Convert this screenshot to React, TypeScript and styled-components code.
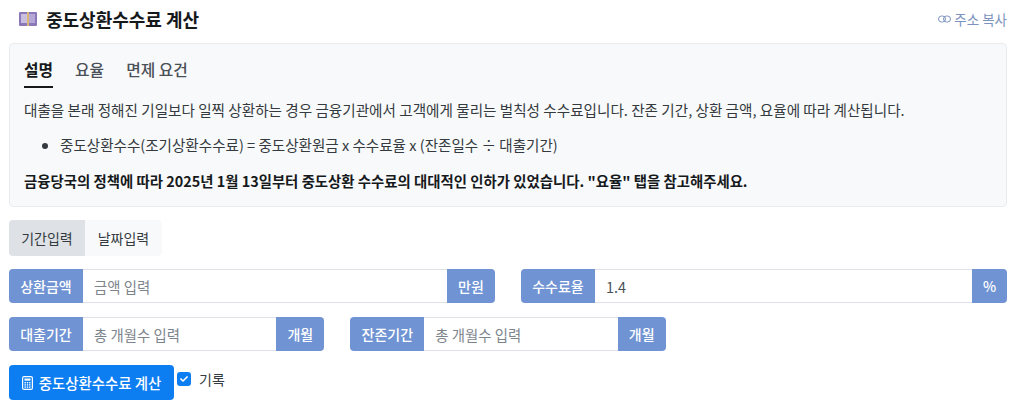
import React, { useState } from "react";
import styled, { createGlobalStyle } from "styled-components";
import { FaCheck } from "react-icons/fa";

const GlobalStyle = createGlobalStyle`
  html, body {
    margin: 0;
    padding: 0;
    background: #fff;
    font-family: "Noto Sans CJK KR", "Noto Sans", sans-serif;
    color: #212529;
  }
  * { box-sizing: border-box; }
`;

const Page = styled.div`
  width: 1024px;
  height: 411px;
  overflow: hidden;
  padding: 0 17px 0 9px;
`;

const Header = styled.header`
  display: flex;
  align-items: center;
  justify-content: space-between;
  height: 43px;
  padding: 0 0 5px 10px;
`;

const Title = styled.h1`
  display: flex;
  align-items: center;
  gap: 9px;
  margin: 0;
  font-size: 18px;
  font-weight: 700;
  line-height: 24px;
  color: #16191c;
`;

const CopyLink = styled.a`
  display: flex;
  align-items: center;
  gap: 3px;
  font-size: 13.5px;
  color: #7b93bd;
  text-decoration: none;
`;

const InfoPanel = styled.section`
  height: 164px;
  padding: 12px 14px;
  background: #f8f9fa;
  border: 1px solid #e9ecef;
  border-radius: 4px;
`;

const Tabs = styled.div`
  display: flex;
  gap: 22px;
  height: 32px;
`;

const Tab = styled.div<{ $active?: boolean }>`
  height: 32px;
  border-bottom: 2px solid ${({ $active }) => ($active ? "#16191c" : "transparent")};
  color: ${({ $active }) => ($active ? "#16191c" : "#495057")};
  font-size: 15.8px;
  font-weight: ${({ $active }) => ($active ? 700 : 500)};
  line-height: 28px;
`;

const Paragraph = styled.p`
  margin: 11px 0 0;
  font-size: 14.6px;
  line-height: 22px;
  color: #343a40;
  white-space: nowrap;
`;

const BulletList = styled.ul`
  margin: 13px 0 0;
  padding-left: 36px;
  font-size: 14.55px;
  line-height: 22px;
  color: #343a40;
  white-space: nowrap;
`;

const Notice = styled.p`
  margin: 14px 0 0;
  font-size: 14.4px;
  font-weight: 700;
  line-height: 22px;
  color: #16191c;
  white-space: nowrap;
`;

const ModeSwitch = styled.div`
  display: inline-flex;
  margin-top: 13px;
  height: 36px;
  border-radius: 4px;
  overflow: hidden;
  vertical-align: top;
`;

const ModeButton = styled.button<{ $active?: boolean }>`
  width: ${({ $active }) => ($active ? "76px" : "77px")};
  border: 0;
  padding: 0;
  background: ${({ $active }) => ($active ? "#dee2e6" : "#f8f9fa")};
  color: #343a40;
  font-family: inherit;
  font-size: 14px;
`;

const FieldRow = styled.div<{ $cols: number; $top: number }>`
  display: grid;
  grid-template-columns: repeat(${({ $cols }) => $cols}, 1fr);
  column-gap: 26px;
  margin-top: ${({ $top }) => $top}px;
`;

const InputGroup = styled.div`
  display: flex;
  height: 34px;
`;

const Addon = styled.span<{ $side: "start" | "end"; $width: number }>`
  display: flex;
  flex: none;
  align-items: center;
  justify-content: center;
  width: ${({ $width }) => $width}px;
  background: #7093d3;
  color: #fff;
  font-size: 14px;
  font-weight: 500;
  border-radius: ${({ $side }) => ($side === "start" ? "4px 0 0 4px" : "0 4px 4px 0")};
`;

const FieldInput = styled.input`
  flex: 1;
  min-width: 0;
  padding: 0 11px;
  border: 1px solid #dee2e6;
  border-width: 1px 0;
  border-radius: 0;
  background: #fff;
  color: #495057;
  font-family: inherit;
  font-size: 14.4px;
  outline: none;
  &::placeholder {
    color: #7d858c;
  }
`;

const ActionRow = styled.div`
  display: flex;
  align-items: flex-start;
  margin-top: 14px;
`;

const SubmitButton = styled.button`
  display: flex;
  align-items: center;
  justify-content: center;
  gap: 6px;
  width: 165px;
  height: 35px;
  padding: 0;
  border: 0;
  border-radius: 4px;
  background: #0d7ef2;
  color: #fff;
  font-family: inherit;
  font-size: 14.4px;
  font-weight: 500;
`;

const RecordLabel = styled.label`
  display: flex;
  align-items: center;
  gap: 8px;
  height: 28px;
  margin-left: 3px;
  font-size: 14px;
  color: #343a40;
`;

const CheckMark = styled.span`
  display: flex;
  align-items: center;
  justify-content: center;
  width: 14px;
  height: 14px;
  border-radius: 3px;
  background: #0d7ef2;
  color: #fff;
  font-size: 8px;
`;

// 책 아이콘
const BookIcon = () => (
  <svg width="18" height="14" viewBox="0 0 18 14" aria-hidden="true">
    <rect x="0" y="0" width="18" height="14" rx="1" fill="#8a78b8" />
    <rect x="2" y="2" width="6" height="9" fill="#c9bfe0" />
    <rect x="10" y="2" width="6" height="9" fill="#b5a8d6" />
    <rect x="8" y="0" width="2" height="14" fill="#d8b878" />
  </svg>
);

// 링크 아이콘
const ChainIcon = () => (
  <svg width="13" height="8" viewBox="0 0 13 8" fill="none" stroke="currentColor" strokeWidth="1" aria-hidden="true">
    <rect x="0.5" y="1" width="7" height="6" rx="3" />
    <rect x="5.5" y="1" width="7" height="6" rx="3" />
  </svg>
);

// 세로형 계산기 아이콘
const CalculatorIcon = () => (
  <svg width="11" height="14" viewBox="0 0 11 14" aria-hidden="true">
    <rect x="0.6" y="0.6" width="9.8" height="12.8" rx="1.5" fill="none" stroke="currentColor" strokeWidth="1.2" />
    <rect x="2.5" y="2.5" width="6" height="2.2" fill="currentColor" />
    <g fill="currentColor">
      <rect x="2.5" y="6" width="1.4" height="1.4" />
      <rect x="4.8" y="6" width="1.4" height="1.4" />
      <rect x="7.1" y="6" width="1.4" height="1.4" />
      <rect x="2.5" y="8.2" width="1.4" height="1.4" />
      <rect x="4.8" y="8.2" width="1.4" height="1.4" />
      <rect x="7.1" y="8.2" width="1.4" height="1.4" />
      <rect x="2.5" y="10.4" width="1.4" height="1.4" />
      <rect x="4.8" y="10.4" width="1.4" height="1.4" />
      <rect x="7.1" y="10.4" width="1.4" height="1.4" />
    </g>
  </svg>
);

const Field = ({
  label,
  placeholder,
  unit,
  unitWidth,
  value,
}: {
  label: string;
  placeholder?: string;
  unit: string;
  unitWidth: number;
  value?: string;
}) => (
  <InputGroup>
    <Addon $side="start" $width={74}>{label}</Addon>
    <FieldInput placeholder={placeholder} defaultValue={value} />
    <Addon $side="end" $width={unitWidth}>{unit}</Addon>
  </InputGroup>
);

const App = () => {
  const [mode, setMode] = useState("period");
  return (
    <Page>
      <GlobalStyle />
      <Header>
        <Title>
          <BookIcon />
          중도상환수수료 계산
        </Title>
        <CopyLink href="#">
          <ChainIcon />
          주소 복사
        </CopyLink>
      </Header>
      <InfoPanel>
        <Tabs>
          <Tab $active>설명</Tab>
          <Tab>요율</Tab>
          <Tab>면제 요건</Tab>
        </Tabs>
        <Paragraph>
          대출을 본래 정해진 기일보다 일찍 상환하는 경우 금융기관에서 고객에게 물리는 벌칙성 수수료입니다. 잔존 기간, 상환 금액, 요율에 따라 계산됩니다.
        </Paragraph>
        <BulletList>
          <li>중도상환수수(조기상환수수료) = 중도상환원금 x 수수료율 x (잔존일수 ÷ 대출기간)</li>
        </BulletList>
        <Notice>
          금융당국의 정책에 따라 2025년 1월 13일부터 중도상환 수수료의 대대적인 인하가 있었습니다. "요율" 탭을 참고해주세요.
        </Notice>
      </InfoPanel>
      <ModeSwitch>
        <ModeButton $active={mode === "period"} onClick={() => setMode("period")}>기간입력</ModeButton>
        <ModeButton $active={mode === "date"} onClick={() => setMode("date")}>날짜입력</ModeButton>
      </ModeSwitch>
      <FieldRow $cols={2} $top={13}>
        <Field label="상환금액" placeholder="금액 입력" unit="만원" unitWidth={48} />
        <Field label="수수료율" value="1.4" unit="%" unitWidth={35} />
      </FieldRow>
      <FieldRow $cols={3} $top={14}>
        <Field label="대출기간" placeholder="총 개월수 입력" unit="개월" unitWidth={48} />
        <Field label="잔존기간" placeholder="총 개월수 입력" unit="개월" unitWidth={48} />
      </FieldRow>
      <ActionRow>
        <SubmitButton>
          <CalculatorIcon />
          중도상환수수료 계산
        </SubmitButton>
        <RecordLabel>
          <CheckMark><FaCheck /></CheckMark>
          기록
        </RecordLabel>
      </ActionRow>
    </Page>
  );
};

export default App;
